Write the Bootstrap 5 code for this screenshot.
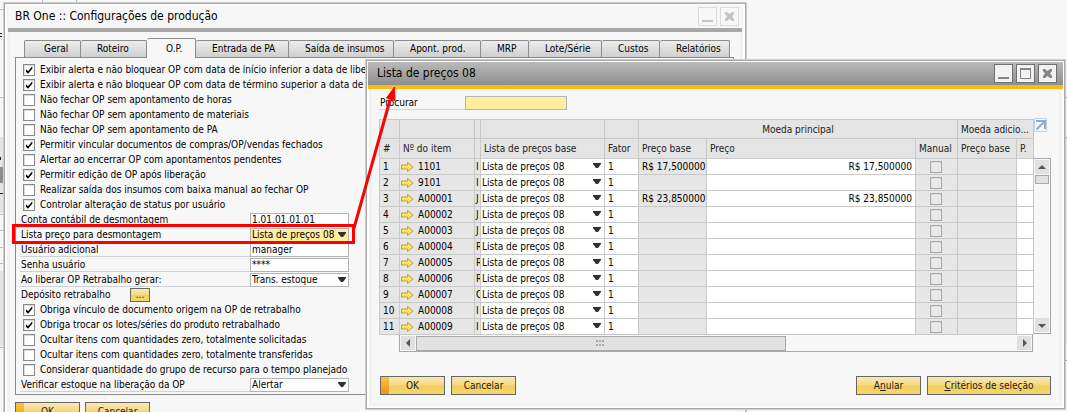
<!DOCTYPE html>
<html lang="pt-BR">
<head>
<meta charset="utf-8">
<meta name="viewport" content="width=device-width, initial-scale=1">
<title>BR One :: Configurações de produção</title>
<link rel="stylesheet" href="https://cdn.jsdelivr.net/npm/bootstrap@5.3.0/dist/css/bootstrap.min.css">
<style>
html,body{height:100%}
body{font:10px/15px "DejaVu Sans Condensed","DejaVu Sans",sans-serif;color:#000;background:#f7f7f7;overflow:hidden}
.desk{height:100vh;overflow:hidden}
.win{background:#f7f7f7;border:1px solid #ccc;box-shadow:inset 0 0 0 1px #a8a8a8,inset 0 0 0 3px #fff,inset 0 0 0 6px #f1f1f1;padding:2px}
.win-back{left:3px;top:2px;width:69.7%;height:430px}
.win-front{left:365px;right:1px;top:59px}
.bar{height:27px;padding:0 6px 0 9px;font-size:12px;border-bottom:4px solid #a8a8a8;background:#f7f7f7}
.win-back .bar{margin:0 2px;padding:0 3px 0 7px}
.win-front .bar{background:linear-gradient(#bababa,#8e8e8e);border-color:#fdb813}
.wbtn{width:19px;height:19px;padding:0;border:1px solid #dcdcdc;background:#f7f7f7;color:#c4c4c4;line-height:0}
.win-front .wbtn{border-color:#707070;background:#f2f2f2;color:#858585}
.wbtn svg{display:block}
.tabs{display:grid;grid-template-columns:57px 66px 49px 93px 105px 87px 48px 73px 58px 70px;height:19px;align-items:end;margin:6px 0 0 18px}
.tabs button{height:17px;padding:0 0 0 16px;border:1px solid #8c8c8c;border-bottom:0;border-left-width:0;border-radius:2px 2px 0 0;background:linear-gradient(#ededed,#cfcfcf);text-align:left;white-space:nowrap;overflow:hidden;line-height:16px}
.tabs button:first-child{border-left-width:1px;padding-left:19px}
.tabs .active{height:20px;padding-left:19px;background:#f7f7f7;margin-bottom:-1px;position:relative}
.pane{border:1px solid #8a8a8a;margin:0 10px 0 9px;padding:4px 0 2px 4px}
.opt{height:15px;gap:5px;padding-left:3px;white-space:nowrap}
.tick{appearance:none;flex:none;width:12px;height:12px;margin:0;border:1px solid #858a90;background:#fff;box-shadow:inset 1px 1px 0 #ddd}
.tick:checked{background:#fff url("data:image/svg+xml,%3Csvg xmlns='http://www.w3.org/2000/svg' viewBox='0 0 10 10'%3E%3Cpath d='M2 4.2v2.6l2 2 4.3-5V1.3L4 6.2z'/%3E%3C/svg%3E")}
.tick:disabled{opacity:1;background:#e9e9e9;border-color:#a8a8a8}
.fld{width:329px;height:15px}
.fld label{width:230px;height:14px;line-height:14px;padding-left:1px;border-bottom:1px solid #cfd2d6;white-space:nowrap}
.box{height:14px;padding:0 1px;border:1px solid #b4b4b4;border-radius:0;background:#fff;color:#000;font:inherit;line-height:12px;min-width:0}
.fld .box{width:99px}
.drop{appearance:none;background-image:url("data:image/svg+xml,%3Csvg xmlns='http://www.w3.org/2000/svg' width='8' height='5'%3E%3Cpath d='M0 0h8v1L5 5H3L0 1z' fill='%23303038'/%3E%3C/svg%3E");background-repeat:no-repeat;background-position:right 2px top 3px}
.hot{background-color:#ffee9e}
.gold{height:19px;padding:0;border:1px solid #666;background:linear-gradient(#f8e8b8 0%,#f5d880 48%,#f3cf58 52%,#f6d870);color:#222;line-height:16px;min-width:65px}
.gold-main{background:linear-gradient(#fdc23a,#ee9420) left/8px 100% no-repeat,linear-gradient(#f8e8b8 0%,#f5d880 48%,#f3cf58 52%,#f6d870)}
.gold-wide{width:124px}
.depot{width:130px;padding-left:1px}
.dots{min-width:20px;height:14px;line-height:8px;margin-left:auto}
.fld .find-label{width:86px}
.fld .find-box{width:102px;background:#ffee9e;border-color:#b0b4b8}
.sheet{table-layout:fixed;width:100%;border-collapse:collapse;background:#fff}
.sheet th,.sheet td{border:1px solid #c9c9c9;height:16px;padding:0 3px;overflow:hidden;white-space:nowrap;line-height:15px;color:#000}
.sheet th{background:#e4e4e4;font-weight:400;color:#222}
.sheet thead tr:first-child th{height:19px}
.sheet thead tr:last-child th{height:20px}
.sheet .off{background:#e6e6e6}
.sheet .clip{padding:0 0 0 1px;text-overflow:clip}
.sheet .code{padding-left:1px}
.sheet td.pick{padding:0}
.sheet .drop{display:block;width:100%;height:15px;border:0;padding:0 1px;background-color:#fff;background-position:right 3px top 4px;font:inherit;line-height:15px;color:#000}
.sheet .tick{display:block;margin:0 auto}
.vbar{width:17px;margin-top:39px;height:176px;border:1px solid #a8a8a8;border-left:0;padding:1px}
.hbar{height:17px;margin:0 18px 0 20px;border:1px solid #a8a8a8;border-top:0;padding:1px}
.sbtn{width:14px;height:14px;flex:none;padding:0;border:0;background:#e0e0e0;line-height:0}
.hthumb{width:58.7%;height:15px;margin-left:1px;background:#e1e1e1;border:1px solid #a8a8a8}
.vthumb{width:14px;height:9px;margin-top:1px;background:#e1e1e1;border:1px solid #a8a8a8}
.body2{padding:7px 12px 0 11px}
.jump{right:-13px;top:-1px;line-height:0}
.marker{left:0;top:0;pointer-events:none}
.foot-back{gap:5px;padding:7px 0 0 9px}
.foot-front{gap:6px;padding:24px 0 12px 1px}
</style>
</head>
<body>
<main class="desk position-relative">
<svg class="position-absolute top-0 start-0" width="100" height="412" aria-hidden="true"><path d="M42.500 0v2M76.500 0v2M0 9.500h3M0 97.500h3M0 137.500h3M0 214.500h3M0 230.500h3M0 247.500h3M0 263.500h3M0 347.500h3" stroke="#bbb"/><path d="M0 137h3v76H0zM0 271h3v75H0z" fill="#e4e4e4"/><path d="M0 167h3v16H0z" fill="#8c8c8c"/><path d="M0 33h2v1H0zM0 36h2v1H0zM0 157h1v3H0zM0 193h3v1H0z" fill="#222"/></svg>
<svg class="position-absolute top-0 end-0" width="3" height="412" aria-hidden="true"><path d="M0 97.500h3M0 137.500h3M0 360.500h3" stroke="#888"/><path d="M0 138h3v206H0z" fill="#e4e4e4"/></svg>

<section class="win win-back position-absolute" aria-label="Configurações de produção">
  <header class="bar d-flex align-items-center"><span class="flex-grow-1">BR One :: Configurações de produção</span>
    <span class="d-flex" style="gap:3px"><button class="wbtn" aria-label="Minimizar"><svg width="17" height="17"><path d="M3 13h11" stroke="currentColor" stroke-width="2"/></svg></button>
    <button class="wbtn" aria-label="Fechar"><svg width="17" height="17"><path d="M4 4h2l2.500 2L11 4h2v2l-2 2.500L13 11v2h-2l-2.500-2L6 13H4v-2l2-2.500L4 6z" fill="currentColor"/></svg></button></span>
  </header>
  <nav class="tabs" aria-label="Seções"><button>Geral</button><button>Roteiro</button><button class="active">O.P.</button><button>Entrada de PA</button><button>Saída de insumos</button><button>Apont. prod.</button><button>MRP</button><button>Lote/Série</button><button>Custos</button><button>Relatórios</button></nav>
  <form class="pane">
    <label class="opt d-flex align-items-center"><input type="checkbox" class="tick" checked>Exibir alerta e não bloquear OP com data de início inferior a data de liberação</label>
    <label class="opt d-flex align-items-center"><input type="checkbox" class="tick" checked>Exibir alerta e não bloquear OP com data de término superior a data de vencimento</label>
    <label class="opt d-flex align-items-center"><input type="checkbox" class="tick">Não fechar OP sem apontamento de horas</label>
    <label class="opt d-flex align-items-center"><input type="checkbox" class="tick">Não fechar OP sem apontamento de materiais</label>
    <label class="opt d-flex align-items-center"><input type="checkbox" class="tick">Não fechar OP sem apontamento de PA</label>
    <label class="opt d-flex align-items-center"><input type="checkbox" class="tick" checked>Permitir vincular documentos de compras/OP/vendas fechados</label>
    <label class="opt d-flex align-items-center"><input type="checkbox" class="tick">Alertar ao encerrar OP com apontamentos pendentes</label>
    <label class="opt d-flex align-items-center"><input type="checkbox" class="tick" checked>Permitir edição de OP após liberação</label>
    <label class="opt d-flex align-items-center"><input type="checkbox" class="tick">Realizar saída dos insumos com baixa manual ao fechar OP</label>
    <label class="opt d-flex align-items-center"><input type="checkbox" class="tick" checked>Controlar alteração de status por usuário</label>
    <div class="fld d-flex align-items-center"><label for="conta">Conta contábil de desmontagem</label><input id="conta" class="box" value="1.01.01.01.01"></div>
    <div class="fld d-flex align-items-center"><label for="lista">Lista preço para desmontagem</label><select id="lista" class="box drop hot"><option>Lista de preços 08</option></select></div>
    <div class="fld d-flex align-items-center"><label for="usuario">Usuário adicional</label><input id="usuario" class="box" value="manager"></div>
    <div class="fld d-flex align-items-center"><label for="senha">Senha usuário</label><input id="senha" class="box" value="****"></div>
    <div class="fld d-flex align-items-center"><label for="gerar">Ao liberar OP Retrabalho gerar:</label><select id="gerar" class="box drop"><option>Trans. estoque</option></select></div>
    <div class="opt depot d-flex align-items-center"><span>Depósito retrabalho</span><button type="button" class="gold dots">...</button></div>
    <label class="opt d-flex align-items-center"><input type="checkbox" class="tick" checked>Obriga vínculo de documento origem na OP de retrabalho</label>
    <label class="opt d-flex align-items-center"><input type="checkbox" class="tick" checked>Obriga trocar os lotes/séries do produto retrabalhado</label>
    <label class="opt d-flex align-items-center"><input type="checkbox" class="tick">Ocultar itens com quantidades zero, totalmente solicitadas</label>
    <label class="opt d-flex align-items-center"><input type="checkbox" class="tick">Ocultar itens com quantidades zero, totalmente transferidas</label>
    <label class="opt d-flex align-items-center"><input type="checkbox" class="tick">Considerar quantidade do grupo de recurso para o tempo planejado</label>
    <div class="fld d-flex align-items-center"><label for="verificar">Verificar estoque na liberação da OP</label><select id="verificar" class="box drop"><option>Alertar</option></select></div>
  </form>
  <footer class="foot-back d-flex"><button class="gold gold-main">OK</button><button class="gold">Cancelar</button></footer>
</section>

<section class="win win-front position-absolute" aria-label="Lista de preços 08">
  <header class="bar d-flex align-items-center"><span class="flex-grow-1">Lista de preços 08</span>
    <span class="d-flex" style="gap:3px"><button class="wbtn" aria-label="Minimizar"><svg width="17" height="17"><path d="M3 13h11" stroke="currentColor" stroke-width="2"/></svg></button>
    <button class="wbtn" aria-label="Maximizar"><svg width="17" height="17"><path d="M3 3h11v11H3zM4 5v8h9V5z" fill="currentColor" fill-rule="evenodd"/></svg></button>
    <button class="wbtn" aria-label="Fechar"><svg width="17" height="17"><path d="M4 4h2l2.500 2L11 4h2v2l-2 2.500L13 11v2h-2l-2.500-2L6 13H4v-2l2-2.500L4 6z" fill="currentColor"/></svg></button></span>
  </header>
  <div class="body2">
    <div class="fld d-flex align-items-start"><label for="procurar" class="find-label">Procurar</label><input id="procurar" class="box find-box"></div>
    <div class="d-flex mt-2">
      <div class="position-relative flex-grow-1" style="min-width:0">
        <table class="sheet">
          <colgroup><col style="width:20px"><col style="width:75px"><col style="width:6px"><col style="width:124px"><col style="width:34px"><col style="width:68px"><col><col style="width:42px"><col style="width:59px"><col style="width:17px"></colgroup>
          <thead>
            <tr><th></th><th></th><th></th><th></th><th></th><th colspan="3" class="text-center">Moeda principal</th><th colspan="2">Moeda adicio...</th></tr>
            <tr><th>#</th><th>Nº do item</th><th></th><th>Lista de preços base</th><th>Fator</th><th>Preço base</th><th>Preço</th><th>Manual</th><th>Preço base</th><th>P.</th></tr>
          </thead>
          <tbody id="linhas"></tbody>
        </table>
        <a href="#" class="jump position-absolute" aria-label="Abrir"><svg width="13" height="14"><path d="M.5.500h12v13H.500z" fill="#f7f7f7" stroke="#bcd4e8"/><path d="M2 3h9v8M10 4L2.500 11.500" fill="none" stroke="#8fadd0" stroke-width="2"/></svg></a>
      </div>
      <div class="vbar d-flex flex-column"><button class="sbtn" aria-label="Subir"><svg width="14" height="14"><path d="M3 9h8L7 5z" fill="#555"/></svg></button><div class="vthumb"></div><button class="sbtn mt-auto" aria-label="Descer"><svg width="14" height="14"><path d="M3 6h8l-4 4z" fill="#555"/></svg></button></div>
    </div>
    <div class="hbar d-flex align-items-center"><button class="sbtn" aria-label="Esquerda"><svg width="14" height="14"><path d="M9 3v8L5 7z" fill="#555"/></svg></button>
      <div class="hthumb d-flex align-items-center justify-content-center"><svg width="9" height="6"><path d="M0 1h9M0 5h9" stroke="#aaa" stroke-width="2" stroke-dasharray="2 1"/></svg></div>
      <button class="sbtn ms-auto" aria-label="Direita"><svg width="14" height="14"><path d="M6 3v8l4-4z" fill="#555"/></svg></button></div>
    <footer class="foot-front d-flex"><button class="gold gold-main">OK</button><button class="gold me-auto">Cancelar</button><button class="gold">A<u>n</u>ular</button><button class="gold gold-wide"><u>C</u>ritérios de seleção</button></footer>
  </div>
</section>

<svg class="marker position-absolute" width="420" height="260" aria-hidden="true"><path d="M13.500 225.500h340v17h-340z" fill="none" stroke="#f00" stroke-width="3"/><path d="M354 228L390 100" stroke="#f00" stroke-width="3"/><path d="M394.500 87l-8 11 8.500 2.500z" fill="#f00" stroke="#f00"/></svg>
</main>
<script src="https://cdn.jsdelivr.net/npm/bootstrap@5.3.0/dist/js/bootstrap.bundle.min.js"></script>
<script>
const itens = [['1101','I','R$ 17,500000'],['9101','I',''],['A00001','J','R$ 23,850000'],['A00002','J',''],['A00003','J',''],['A00004','R',''],['A00005','R',''],['A00006','R',''],['A00007','C',''],['A00008','I',''],['A00009','I','']];
const seta = '<svg width="13" height="10" class="me-1" style="vertical-align:-2px"><path d="M.5 3h6V.500L12 5 6.500 9.500V7h-6z" fill="#ffe45c" stroke="#c9a227"/></svg>';
document.getElementById('linhas').innerHTML = itens.map(([cod, desc, preco], i) =>
 `<tr><td class="off">${i+1}</td><td class="off code">${seta}${cod}</td><td class="off clip">${desc}</td><td class="pick"><select class="drop" aria-label="Lista de preços base ${i+1}"><option>Lista de preços 08</option></select></td><td>1</td><td class="off text-end">${preco}</td><td class="text-end">${preco}</td><td class="off"><input type="checkbox" class="tick" disabled aria-label="Manual ${i+1}"></td><td class="off"></td><td></td></tr>`).join('');
</script>
</body>
</html>
